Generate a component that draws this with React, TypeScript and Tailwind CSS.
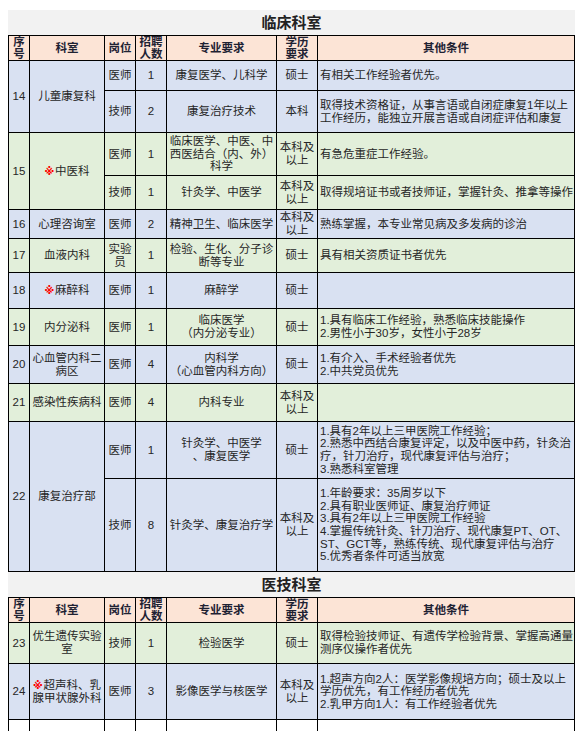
import React from "react";

const B = "bg-[#d9e1f2]";
const G = "bg-[#e2efda]";
const H = "bg-[#fce4d6]";

type CP = {
  children?: React.ReactNode;
  bg: string;
  span?: string;
  left?: boolean;
  head?: boolean;
};

function C({ children, bg, span = "", left = false, head = false }: CP) {
  return (
    <div
      className={
        "flex items-center whitespace-nowrap overflow-visible " +
        (left ? "justify-start text-left pl-[2px] " : "justify-center text-center ") +
        (head ? "font-bold leading-[12px] text-[#1e2233] " : "leading-[12.6px] text-[#262626] ") +
        bg +
        " " +
        span
      }
    >
      <div>{children}</div>
    </div>
  );
}

function Mark() {
  return (
    <span
      className="inline-block text-[10px] font-black text-[#ff0000] align-middle mr-[1px] leading-none"
      style={{ fontFamily: '"DejaVu Sans", "Noto Sans CJK SC", sans-serif' }}
    >
      ※
    </span>
  );
}

const BK = "本科及";
const YS = "以上";

function Header() {
  return (
    <>
      <C bg={H} head>
        序<br />号
      </C>
      <C bg={H} head>科室</C>
      <C bg={H} head>岗位</C>
      <C bg={H} head>
        招聘<br />人数
      </C>
      <C bg={H} head>专业要求</C>
      <C bg={H} head>
        学历<br />要求
      </C>
      <C bg={H} head>其他条件</C>
    </>
  );
}

function Title({ text }: { text: string }) {
  return (
    <div className="h-[25px] flex items-center justify-center text-[15px] font-bold text-[#222222] leading-none">
      {text}
    </div>
  );
}

export default function App() {
  return (
    <div
      className="bg-white pt-[10px] w-[583px] h-[731px] overflow-hidden"
      style={{ fontFamily: '"Liberation Sans", "Noto Sans CJK SC", sans-serif' }}
    >
      <div className="ml-[8px] w-[567px] bg-[#f2f2f2] text-[11.5px]">
        <Title text="临床科室" />
        <div className="grid bg-black gap-[1px] p-[1px] grid-cols-[20px_74px_30px_30px_109px_40px_256px] grid-rows-[24px_29px_41px_42px_33px_28px_33px_35px_36px_37px_37px_56px_92px]">
          <Header />
          {/* 14 */}
          <C bg={B} span="row-span-2">14</C>
          <C bg={B} span="row-span-2">儿童康复科</C>
          <C bg={B}>医师</C>
          <C bg={B}>1</C>
          <C bg={B}>康复医学、儿科学</C>
          <C bg={B}>硕士</C>
          <C bg={B} left>有相关工作经验者优先。</C>
          <C bg={B}>技师</C>
          <C bg={B}>2</C>
          <C bg={B}>康复治疗技术</C>
          <C bg={B}>本科</C>
          <C bg={B} left>
            取得技术资格证，从事言语或自闭症康复1年以上
            <br />
            工作经历，能独立开展言语或自闭症评估和康复
          </C>
          {/* 15 */}
          <C bg={G} span="row-span-2">15</C>
          <C bg={G} span="row-span-2">
            <Mark />
            中医科
          </C>
          <C bg={G}>医师</C>
          <C bg={G}>1</C>
          <C bg={G}>
            临床医学、中医、中
            <br />
            西医结合（内、外）
            <br />
            科学
          </C>
          <C bg={G}>
            {BK}
            <br />
            {YS}
          </C>
          <C bg={G} left>有急危重症工作经验。</C>
          <C bg={G}>技师</C>
          <C bg={G}>1</C>
          <C bg={G}>针灸学、中医学</C>
          <C bg={G}>
            {BK}
            <br />
            {YS}
          </C>
          <C bg={G} left>取得规培证书或者技师证，掌握针灸、推拿等操作</C>
          {/* 16 */}
          <C bg={B}>16</C>
          <C bg={B}>心理咨询室</C>
          <C bg={B}>医师</C>
          <C bg={B}>2</C>
          <C bg={B}>精神卫生、临床医学</C>
          <C bg={B}>
            {BK}
            <br />
            {YS}
          </C>
          <C bg={B} left>熟练掌握，本专业常见病及多发病的诊治</C>
          {/* 17 */}
          <C bg={G}>17</C>
          <C bg={G}>血液内科</C>
          <C bg={G}>
            实验
            <br />
            员
          </C>
          <C bg={G}>1</C>
          <C bg={G}>
            检验、生化、分子诊
            <br />
            断等专业
          </C>
          <C bg={G}>硕士</C>
          <C bg={G} left>具有相关资质证书者优先</C>
          {/* 18 */}
          <C bg={B}>18</C>
          <C bg={B}>
            <Mark />
            麻醉科
          </C>
          <C bg={B}>医师</C>
          <C bg={B}>1</C>
          <C bg={B}>麻醉学</C>
          <C bg={B}>硕士</C>
          <C bg={B} left></C>
          {/* 19 */}
          <C bg={G}>19</C>
          <C bg={G}>内分泌科</C>
          <C bg={G}>医师</C>
          <C bg={G}>1</C>
          <C bg={G}>
            临床医学
            <br />
            （内分泌专业）
          </C>
          <C bg={G}>硕士</C>
          <C bg={G} left>
            1.具有临床工作经验，熟悉临床技能操作
            <br />
            2.男性小于30岁，女性小于28岁
          </C>
          {/* 20 */}
          <C bg={B}>20</C>
          <C bg={B}>
            心血管内科二
            <br />
            病区
          </C>
          <C bg={B}>医师</C>
          <C bg={B}>4</C>
          <C bg={B}>
            内科学
            <br />
            （心血管内科方向）
          </C>
          <C bg={B}>硕士</C>
          <C bg={B} left>
            1.有介入、手术经验者优先
            <br />
            2.中共党员优先
          </C>
          {/* 21 */}
          <C bg={G}>21</C>
          <C bg={G}>感染性疾病科</C>
          <C bg={G}>医师</C>
          <C bg={G}>4</C>
          <C bg={G}>内科专业</C>
          <C bg={G}>
            {BK}
            <br />
            {YS}
          </C>
          <C bg={G} left></C>
          {/* 22 */}
          <C bg={B} span="row-span-2">22</C>
          <C bg={B} span="row-span-2">康复治疗部</C>
          <C bg={B}>医师</C>
          <C bg={B}>1</C>
          <C bg={B}>
            针灸学、中医学
            <br />
            、康复医学
          </C>
          <C bg={B}>硕士</C>
          <C bg={B} left>
            1.具有2年以上三甲医院工作经验；
            <br />
            2.熟悉中西结合康复评定，以及中医中药，针灸治
            <br />
            疗，针刀治疗，现代康复评估与治疗；
            <br />
            3.熟悉科室管理
          </C>
          <C bg={B}>技师</C>
          <C bg={B}>8</C>
          <C bg={B}>针灸学、康复治疗学</C>
          <C bg={B}>
            {BK}
            <br />
            {YS}
          </C>
          <C bg={B} left>
            1.年龄要求：35周岁以下
            <br />
            2.具有职业医师证、康复治疗师证
            <br />
            3.具有2年以上三甲医院工作经验
            <br />
            4.掌握传统针灸、针刀治疗、现代康复PT、OT、
            <br />
            ST、GCT等，熟练传统、现代康复评估与治疗
            <br />
            5.优秀者条件可适当放宽
          </C>
        </div>

        <Title text="医技科室" />
        <div className="grid bg-black gap-[1px] p-[1px] grid-cols-[20px_74px_30px_30px_109px_40px_256px] grid-rows-[24px_40px_55px_40px]">
          <Header />
          {/* 23 */}
          <C bg={G}>23</C>
          <C bg={G}>
            优生遗传实验
            <br />
            室
          </C>
          <C bg={G}>技师</C>
          <C bg={G}>1</C>
          <C bg={G}>检验医学</C>
          <C bg={G}>硕士</C>
          <C bg={G} left>
            取得检验技师证、有遗传学检验背景、掌握高通量
            <br />
            测序仪操作者优先
          </C>
          {/* 24 */}
          <C bg={B}>24</C>
          <C bg={B}>
            <Mark />
            超声科、乳
            <br />
            腺甲状腺外科
          </C>
          <C bg={B}>医师</C>
          <C bg={B}>3</C>
          <C bg={B}>影像医学与核医学</C>
          <C bg={B}>
            {BK}
            <br />
            {YS}
          </C>
          <C bg={B} left>
            1.超声方向2人：医学影像规培方向；硕士及以上
            <br />
            学历优先，有工作经历者优先
            <br />
            2.乳甲方向1人：有工作经验者优先
          </C>
          {/* 25 (cut off) */}
          <C bg="bg-white"></C>
          <C bg="bg-white"></C>
          <C bg="bg-white"></C>
          <C bg="bg-white"></C>
          <C bg="bg-white"></C>
          <C bg="bg-white"></C>
          <C bg="bg-white"></C>
        </div>
      </div>
    </div>
  );
}
